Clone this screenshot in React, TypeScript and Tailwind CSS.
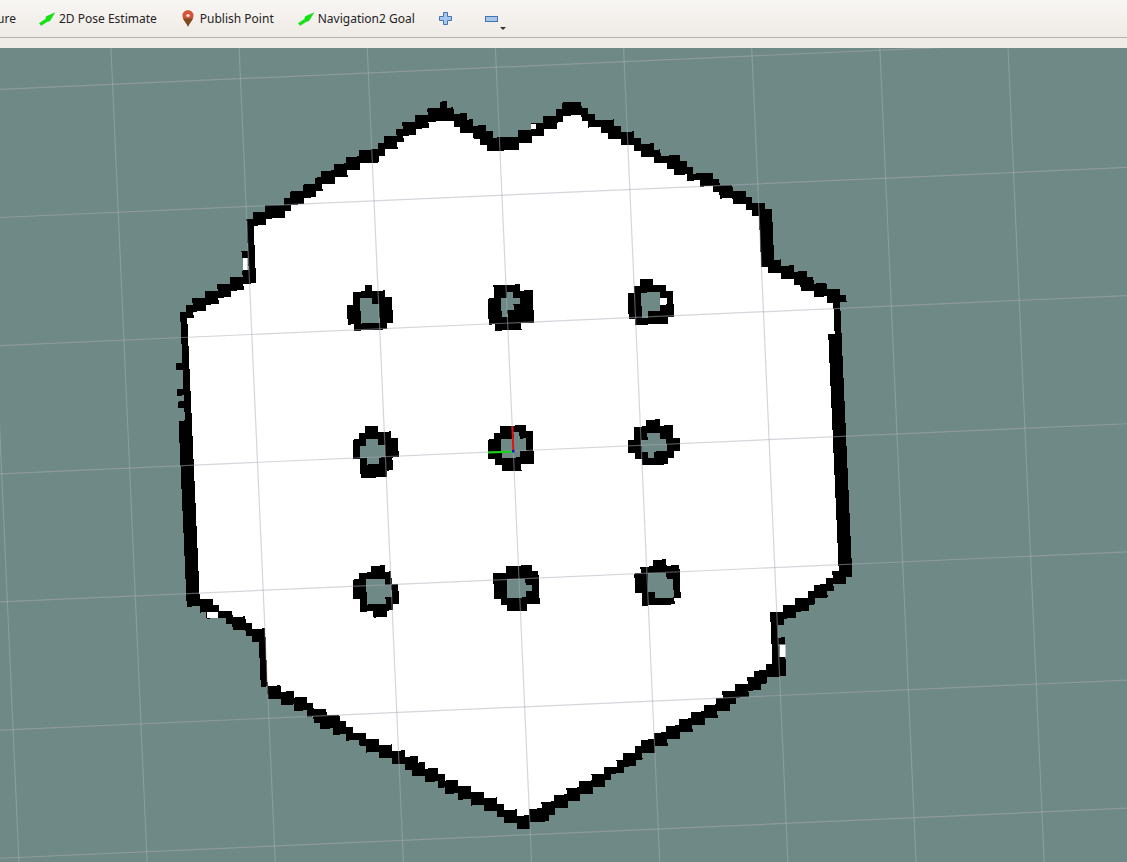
import React from "react";

const O = { x: 513.3, y: 451 };
const ex = { x: 6.395, y: -0.284 };
const ey = { x: 0.284, y: 6.395 };

type P = [number, number];
type Seg = { pts: P[]; w: number };

const walls: Seg[] = [
  { pts: [[184, 318], [190, 310], [213, 298], [237, 285], [249, 278]], w: 11.5 },
  { pts: [[250, 278], [252, 224]], w: 6.5 },
  { pts: [[253, 222], [267, 216], [283, 208], [297, 198], [313, 188], [330, 178], [350, 165], [367, 157], [380, 150], [397, 137], [410, 128], [423, 121], [442, 112], [457, 120], [467, 127], [480, 133], [493, 145], [507, 148], [523, 138], [550, 123], [570, 108], [580, 110], [593, 122], [608, 127], [623, 138], [640, 145], [660, 157], [673, 162], [693, 175], [707, 180], [727, 192], [740, 198], [758, 209]], w: 11.5 },
  { pts: [[444, 105], [444, 106]], w: 5 },
  { pts: [[765, 212], [768, 264]], w: 12 },
  { pts: [[770, 265], [777, 267], [790, 273], [807, 283], [820, 290], [841, 299]], w: 11.5 },
  { pts: [[837, 303], [838, 334]], w: 6 },
  { pts: [[836, 338], [845, 568]], w: 13 },
  { pts: [[847, 574], [827, 587], [810, 598], [790, 612], [778, 617]], w: 11.5 },
  { pts: [[776, 616], [778, 666]], w: 6.5 },
  { pts: [[777, 670], [760, 677], [743, 690], [723, 703], [703, 715], [687, 723], [673, 732], [650, 745], [630, 760], [610, 773], [587, 788], [570, 795], [553, 807], [540, 815], [523, 822], [510, 817], [490, 805], [477, 798], [450, 787], [432, 775], [413, 765], [397, 757], [380, 748], [363, 740], [348, 732], [330, 722], [310, 710], [287, 698], [273, 690]], w: 11.5 },
  { pts: [[263, 681], [264, 673], [261, 640]], w: 6 },
  { pts: [[258, 634], [253, 632], [240, 623], [227, 617], [203, 605], [192, 600]], w: 11.5 },
  { pts: [[192, 596], [186, 445]], w: 13 },
  { pts: [[186, 440], [185, 318]], w: 6.5 },
  { pts: [[178, 366], [185, 366]], w: 6 },
  { pts: [[181, 391], [186, 391]], w: 6 },
  { pts: [[181, 405], [186, 405]], w: 6 },
  { pts: [[183, 427], [186, 427]], w: 11 },
  { pts: [[245, 255], [245, 256]], w: 4 },
  { pts: [[245, 272], [245, 273]], w: 4 },
  { pts: [[782, 642], [782, 641]], w: 4 },
  { pts: [[783, 664], [783, 662]], w: 5 },
];

const fillPoly: P[] = [
  [186, 318], [213, 298], [237, 285], [250, 278], [252, 224], [267, 216], [297, 198], [330, 178], [367, 157], [397, 137], [442, 112], [467, 127], [493, 145], [507, 148], [550, 123], [570, 108], [593, 122], [640, 145], [693, 175], [758, 209], [768, 264], [807, 283], [838, 299], [836, 338], [845, 562], [827, 587], [778, 617], [778, 666], [723, 703], [650, 745], [587, 788], [523, 822], [450, 787], [363, 740], [273, 690], [263, 681], [261, 640], [240, 623], [192, 600],
];

const pillars: { x: number; y: number; r: string[] }[] = [
  { x: 347.3, y: 285, r: ["...#...", ".#####.", ".#oo###", "##ooo##", "##ooo##", "##ooo##", ".#####."] },
  { x: 488.3, y: 285, r: [".####..", ".##o###", "##ooo##", "##oo###", "##o####", "#######", ".####.."] },
  { x: 628.3, y: 279.3, r: ["..##...", ".#####.", "##ooo##", "##oooW#", "##ooo##", "##o####", ".#####."] },
  { x: 353.3, y: 426, r: ["..##...", ".#####.", "##oo###", "#oooo##", "#oooo##", ".#oo##.", ".#####.", ".####.."] },
  { x: 488.3, y: 426, r: ["..####.", ".###o##", "##oooo#", "##oooo#", "##ooo##", ".######", "..###.."] },
  { x: 628.3, y: 420, r: ["...##...", ".######.", ".##oo##.", "##oooo##", "##oooo##", ".##o###.", "..####.."] },
  { x: 353.3, y: 566, r: ["...##..", ".#####.", "##ooo#.", "##oooo#", "##oooo#", ".#ooo##", ".#####.", "...##.."] },
  { x: 494, y: 566, r: ["..####.", "#######", "##ooo##", "##oooo#", "##ooo##", ".######", "..###.."] },
  { x: 635, y: 560, r: ["...##..", ".######", "##ooo##", "##oooo#", "##oooo#", ".##ooo#", ".#####."] },
];

const hash = (i: number, j: number) => {
  const s = Math.sin(i * 12.9898 + j * 78.233) * 43758.5453;
  return s - Math.floor(s);
};

const distSeg = (p: P, a: P, b: P) => {
  const dx = b[0] - a[0];
  const dy = b[1] - a[1];
  const l = dx * dx + dy * dy || 1;
  const t = Math.max(0, Math.min(1, ((p[0] - a[0]) * dx + (p[1] - a[1]) * dy) / l));
  return Math.hypot(p[0] - a[0] - t * dx, p[1] - a[1] - t * dy);
};

// Each occupied map cell is drawn slightly oversized so neighbours join without seams.
const quad = (x: number, y: number) => {
  const p = (a: number, b: number) =>
    `${(x + a * ex.x + b * ey.x).toFixed(2)} ${(y + a * ex.y + b * ey.y).toFixed(2)}`;
  return `M${p(-0.04, -0.04)}L${p(1.04, -0.04)}L${p(1.04, 1.04)}L${p(-0.04, 1.04)}Z`;
};

const buildWalls = () => {
  let d = "";
  for (let i = -60; i <= 60; i++) {
    for (let j = -60; j <= 65; j++) {
      const x = O.x + i * ex.x + j * ey.x;
      const y = O.y + i * ex.y + j * ey.y;
      const c: P = [x + (ex.x + ey.x) / 2, y + (ex.y + ey.y) / 2];
      let hit = false;
      for (const s of walls) {
        const thick = s.w / 2 + (s.w < 7 ? 0.3 : (hash(i, j) - 0.5) * 1.6);
        for (let k = 0; k + 1 < s.pts.length && !hit; k++) {
          if (distSeg(c, s.pts[k], s.pts[k + 1]) < thick) hit = true;
        }
        if (hit) break;
      }
      if (hit) d += quad(x, y);
    }
  }
  return d;
};

const buildPillars = (ch: string) => {
  let d = "";
  for (const p of pillars) {
    p.r.forEach((row, r) => {
      row.split("").forEach((c, k) => {
        if (c === ch) {
          d += quad(p.x + k * 6.4 + r * 0.284 - 1, p.y + r * 6.4 - k * 0.284 + 1);
        }
      });
    });
  }
  return d;
};

const gridLines = () => {
  const out: { x1: number; y1: number; x2: number; y2: number }[] = [];
  const sx = { x: 127.9, y: -5.68 };
  const sy = { x: 5.68, y: 127.9 };
  for (let k = -6; k <= 6; k++) {
    out.push({
      x1: O.x + k * sx.x - 5 * sy.x,
      y1: O.y + k * sx.y - 5 * sy.y,
      x2: O.x + k * sx.x + 5 * sy.x,
      y2: O.y + k * sx.y + 5 * sy.y,
    });
  }
  for (let k = -4; k <= 4; k++) {
    out.push({
      x1: O.x + k * sy.x - 7 * sx.x,
      y1: O.y + k * sy.y - 7 * sx.y,
      x2: O.x + k * sy.x + 7 * sx.x,
      y2: O.y + k * sy.y + 7 * sx.y,
    });
  }
  return out;
};

const ArrowIcon = () => (
  <svg width="17" height="14" viewBox="0 0 17 14" className="shrink-0">
    <path d="M0.4 11.2 L2 13.6 L8.4 9.6 L10.8 9 L15.8 0.8 L7.2 4.6 L6.8 6.9 Z" fill="#0ee60e" stroke="#14c414" strokeWidth="0.4" />
  </svg>
);

const PinIcon = () => (
  <svg width="12" height="17" viewBox="0 0 12 17" className="shrink-0">
    <path d="M6 0.3 C2.6 0.3 0.4 2.8 0.4 5.7 C0.4 9.2 4.4 12.6 6 16.7 C7.6 12.6 11.6 9.2 11.6 5.7 C11.6 2.8 9.4 0.3 6 0.3 Z" fill="#d8523a" />
    <path d="M1 8.4 C2.4 11 4.8 13.5 6 16.7 C7.2 13.5 9.6 11 11 8.4 Z" fill="#7d4a22" />
    <circle cx="6" cy="5.6" r="1.7" fill="#f6e8dc" />
  </svg>
);

const ToolItem = ({ icon, label, className }: { icon: React.ReactNode; label: string; className: string }) => (
  <div className={`flex items-center ${className}`}>
    {icon}
    <span>{label}</span>
  </div>
);

export default function App() {
  const wallPath = buildWalls();
  const pillarBlack = buildPillars("#");
  const pillarGrey = buildPillars("o");
  const pillarWhite = buildPillars("W");
  return (
    <div className="flex h-[862px] w-[1127px] flex-col overflow-hidden bg-[#efebe7] font-['Noto_Sans',sans-serif] text-[12px] text-[#232323]">
      <div className="flex h-[38px] shrink-0 items-center border-b border-[#b7b2ac] bg-gradient-to-b from-[#f8f6f3] to-[#efebe7]">
        <div className="flex w-[16px] shrink-0 justify-end overflow-hidden">
          <span className="shrink-0">ure</span>
        </div>
        <ToolItem className="ml-[23px] gap-[3px]" icon={<ArrowIcon />} label="2D Pose Estimate" />
        <ToolItem className="ml-[25px] gap-[6px]" icon={<PinIcon />} label="Publish Point" />
        <ToolItem className="ml-[24px] gap-[3px]" icon={<ArrowIcon />} label="Navigation2 Goal" />
        <svg width="13" height="13" viewBox="0 0 13 13" className="ml-[24px] shrink-0">
          <path d="M4.5 0.5 H8.5 V4.5 H12.5 V8.5 H8.5 V12.5 H4.5 V8.5 H0.5 V4.5 H4.5 Z" fill="#a9c6ea" stroke="#3f74b5" />
        </svg>
        <div className="relative ml-[33px] h-[6px] w-[13px] shrink-0 border border-[#3f74b5] bg-[#a9c6ea]">
          <div className="absolute left-[14px] top-[10px] h-0 w-0 border-x-[3px] border-t-[3px] border-x-transparent border-t-[#333333]" />
        </div>
      </div>
      <div className="h-[10px] shrink-0 bg-[#efebe7]" />
      <div className="min-h-0 flex-1 bg-[#6f8986]">
        <svg width="1127" height="814" viewBox="0 48 1127 814" className="block">
          <polygon points={fillPoly.map((p) => p.join(",")).join(" ")} fill="#ffffff" />
          <path d={wallPath} fill="#000000" shapeRendering="crispEdges" />
          <path d={pillarGrey} fill="#6f8986" shapeRendering="crispEdges" />
          <path d={pillarBlack} fill="#000000" shapeRendering="crispEdges" />
          <path d={pillarWhite} fill="#ffffff" shapeRendering="crispEdges" />
          <rect x="243" y="258" width="4.5" height="12" fill="#ffffff" />
          <rect x="780" y="645" width="5.5" height="12" fill="#ffffff" />
          <rect x="207" y="612" width="11" height="6" fill="#ffffff" />
          <rect x="531" y="124" width="5" height="5" fill="#ffffff" />
          {gridLines().map((l, i) => (
            <line key={i} {...l} stroke="#a8aeb8" strokeOpacity="0.5" strokeWidth="1.2" />
          ))}
          <line x1="513.3" y1="451" x2="512.4" y2="426" stroke="#e01212" strokeWidth="2" />
          <line x1="513.3" y1="451.5" x2="488" y2="452.6" stroke="#12d812" strokeWidth="2" />
          <rect x="512" y="450" width="2.5" height="2.5" fill="#1414d0" />
        </svg>
      </div>
    </div>
  );
}
